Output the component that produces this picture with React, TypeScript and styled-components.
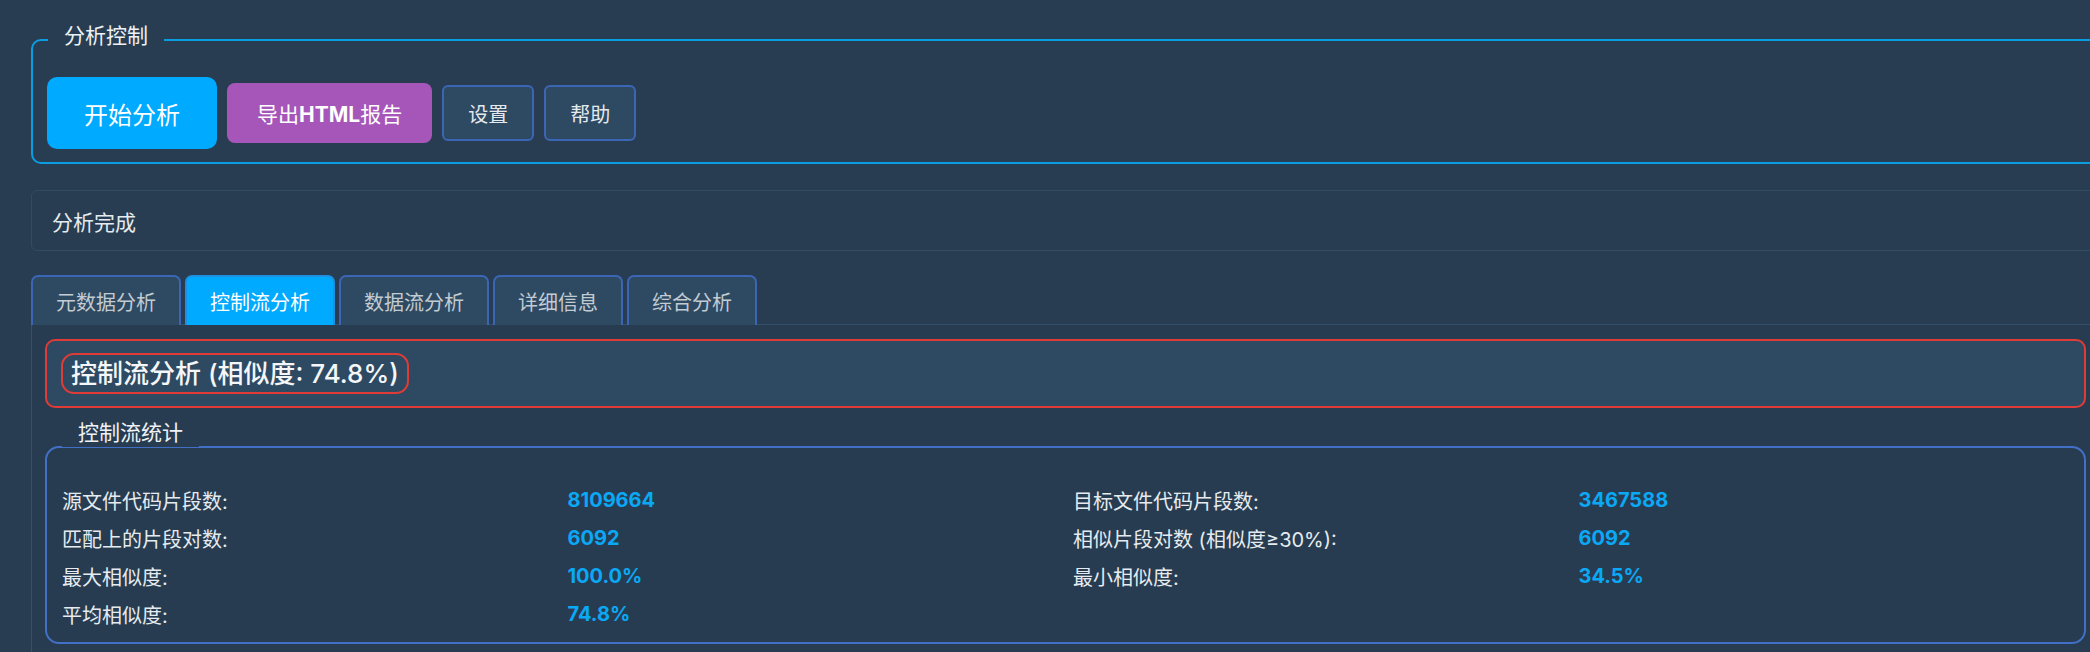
import React, { useState } from "react";
import styled, { createGlobalStyle } from "styled-components";

const GlobalStyle = createGlobalStyle`
  html, body {
    margin: 0;
    padding: 0;
    background: #283d52;
    overflow: hidden;
  }
  body {
    font-family: "Inter", "Noto Sans CJK SC", "Noto Sans", sans-serif;
    color: #e8edf1;
  }
`;

const Page = styled.div`
  width: 2068px;
  padding: 39px 0 0 31px;
  box-sizing: content-box;
`;

const GroupBox = styled.div`
  position: relative;
  border: 2px solid #0b9de2;
  border-radius: 10px;
  padding: 36px 0 13px 14px;
`;

const GroupTitle = styled.div`
  position: absolute;
  top: -18px;
  left: 15px;
  padding: 0 16px;
  background: #283d52;
  font-size: 21px;
  line-height: 26px;
  color: #eef2f5;
`;

const ButtonRow = styled.div`
  display: flex;
  align-items: center;
  gap: 10px;
`;

const ActionButton = styled.button<{ $variant: "primary" | "export" | "plain" }>`
  font-family: inherit;
  color: #ffffff;
  cursor: pointer;
  box-sizing: border-box;
  ${({ $variant }) =>
    $variant === "primary"
      ? `
    height: 72px;
    padding: 0 37px;
    font-size: 24px;
    background: #00aaff;
    border: none;
    border-radius: 10px;
  `
      : $variant === "export"
      ? `
    height: 60px;
    padding: 0 30px;
    font-size: 21px;
    background: #a656b9;
    border: none;
    border-radius: 8px;
  `
      : `
    height: 56px;
    padding: 0 24px;
    font-size: 20px;
    color: #e4e9ee;
    background: #2e4a62;
    border: 2px solid #3b66b6;
    border-radius: 6px;
  `}
`;

const Strong = styled.span`
  font-weight: 700;
`;

const StatusBox = styled.div`
  margin-top: 26px;
  height: 61px;
  box-sizing: border-box;
  display: flex;
  align-items: center;
  padding-left: 20px;
  border: 1px solid #304b62;
  border-radius: 6px;
  font-size: 21px;
  color: #e6ebef;
`;

const TabBar = styled.div`
  display: flex;
  gap: 4px;
  margin-top: 24px;
  position: relative;
  z-index: 1;
  margin-bottom: -1px;
`;

const Tab = styled.div<{ $active?: boolean }>`
  height: 50px;
  box-sizing: border-box;
  padding: 0 23px;
  display: flex;
  align-items: center;
  font-size: 20px;
  border: 2px solid ${({ $active }) => ($active ? "#1f8fe0" : "#3b66b6")};
  border-bottom: none;
  border-radius: 7px 7px 0 0;
  background: ${({ $active }) => ($active ? "#00aaff" : "#2e4a62")};
  color: ${({ $active }) => ($active ? "#ffffff" : "#c3cbd3")};
  cursor: pointer;
`;

const TabPane = styled.div`
  border-top: 1px solid #34506a;
  border-left: 1px solid #34506a;
  background: #273c51;
  padding: 14px 13px 40px 13px;
`;

const HeaderBox = styled.div`
  height: 69px;
  box-sizing: border-box;
  display: flex;
  align-items: center;
  padding-left: 14px;
  border: 2px solid #e03b37;
  border-radius: 10px;
  background: #2e4a62;
`;

const HeaderTitle = styled.div`
  font-size: 26px;
  font-weight: 500;
  line-height: 33px;
  padding: 2px 8px;
  color: #f4f6f8;
  border: 2px solid #e03b37;
  border-radius: 13px;
`;

const StatsSection = styled.div`
  position: relative;
  margin-top: 38px;
  height: 198px;
  box-sizing: border-box;
  border: 2px solid #4270c6;
  border-radius: 14px;
  padding: 33px 0 9px 15px;
`;

const StatsTitle = styled.div`
  position: absolute;
  top: -29px;
  left: 15px;
  padding: 0 16px;
  background: #273c51;
  font-size: 21px;
  line-height: 28px;
  color: #eef2f5;
`;

const StatsGrid = styled.div`
  display: grid;
  grid-template-columns: repeat(4, 1fr);
  grid-auto-rows: 38px;
  align-items: center;
`;

const StatLabel = styled.div`
  font-size: 20px;
  color: #e6ebef;
`;

const StatValue = styled.div`
  font-size: 20px;
  font-weight: 700;
  color: #0aa8f5;
`;

const tabs = ["元数据分析", "控制流分析", "数据流分析", "详细信息", "综合分析"];

const stats: [string, string][] = [
  ["源文件代码片段数:", "8109664"],
  ["目标文件代码片段数:", "3467588"],
  ["匹配上的片段对数:", "6092"],
  ["相似片段对数 (相似度≥30%):", "6092"],
  ["最大相似度:", "100.0%"],
  ["最小相似度:", "34.5%"],
  ["平均相似度:", "74.8%"],
];

const App: React.FC = () => {
  const [activeTab, setActiveTab] = useState<number>(1);

  return (
    <Page>
      <GlobalStyle />
      <GroupBox>
        <GroupTitle>分析控制</GroupTitle>
        <ButtonRow>
          <ActionButton $variant="primary">开始分析</ActionButton>
          <ActionButton $variant="export">
            导出<Strong>HTML</Strong>报告
          </ActionButton>
          <ActionButton $variant="plain">设置</ActionButton>
          <ActionButton $variant="plain">帮助</ActionButton>
        </ButtonRow>
      </GroupBox>

      <StatusBox>分析完成</StatusBox>

      <TabBar>
        {tabs.map((t, i) => (
          <Tab key={t} $active={i === activeTab} onClick={() => setActiveTab(i)}>
            {t}
          </Tab>
        ))}
      </TabBar>
      <TabPane>
        <HeaderBox>
          <HeaderTitle>控制流分析 (相似度: 74.8%)</HeaderTitle>
        </HeaderBox>
        <StatsSection>
          <StatsTitle>控制流统计</StatsTitle>
          <StatsGrid>
            {stats.map(([label, value]) => (
              <React.Fragment key={label}>
                <StatLabel>{label}</StatLabel>
                <StatValue>{value}</StatValue>
              </React.Fragment>
            ))}
          </StatsGrid>
        </StatsSection>
      </TabPane>
    </Page>
  );
};

export default App;
